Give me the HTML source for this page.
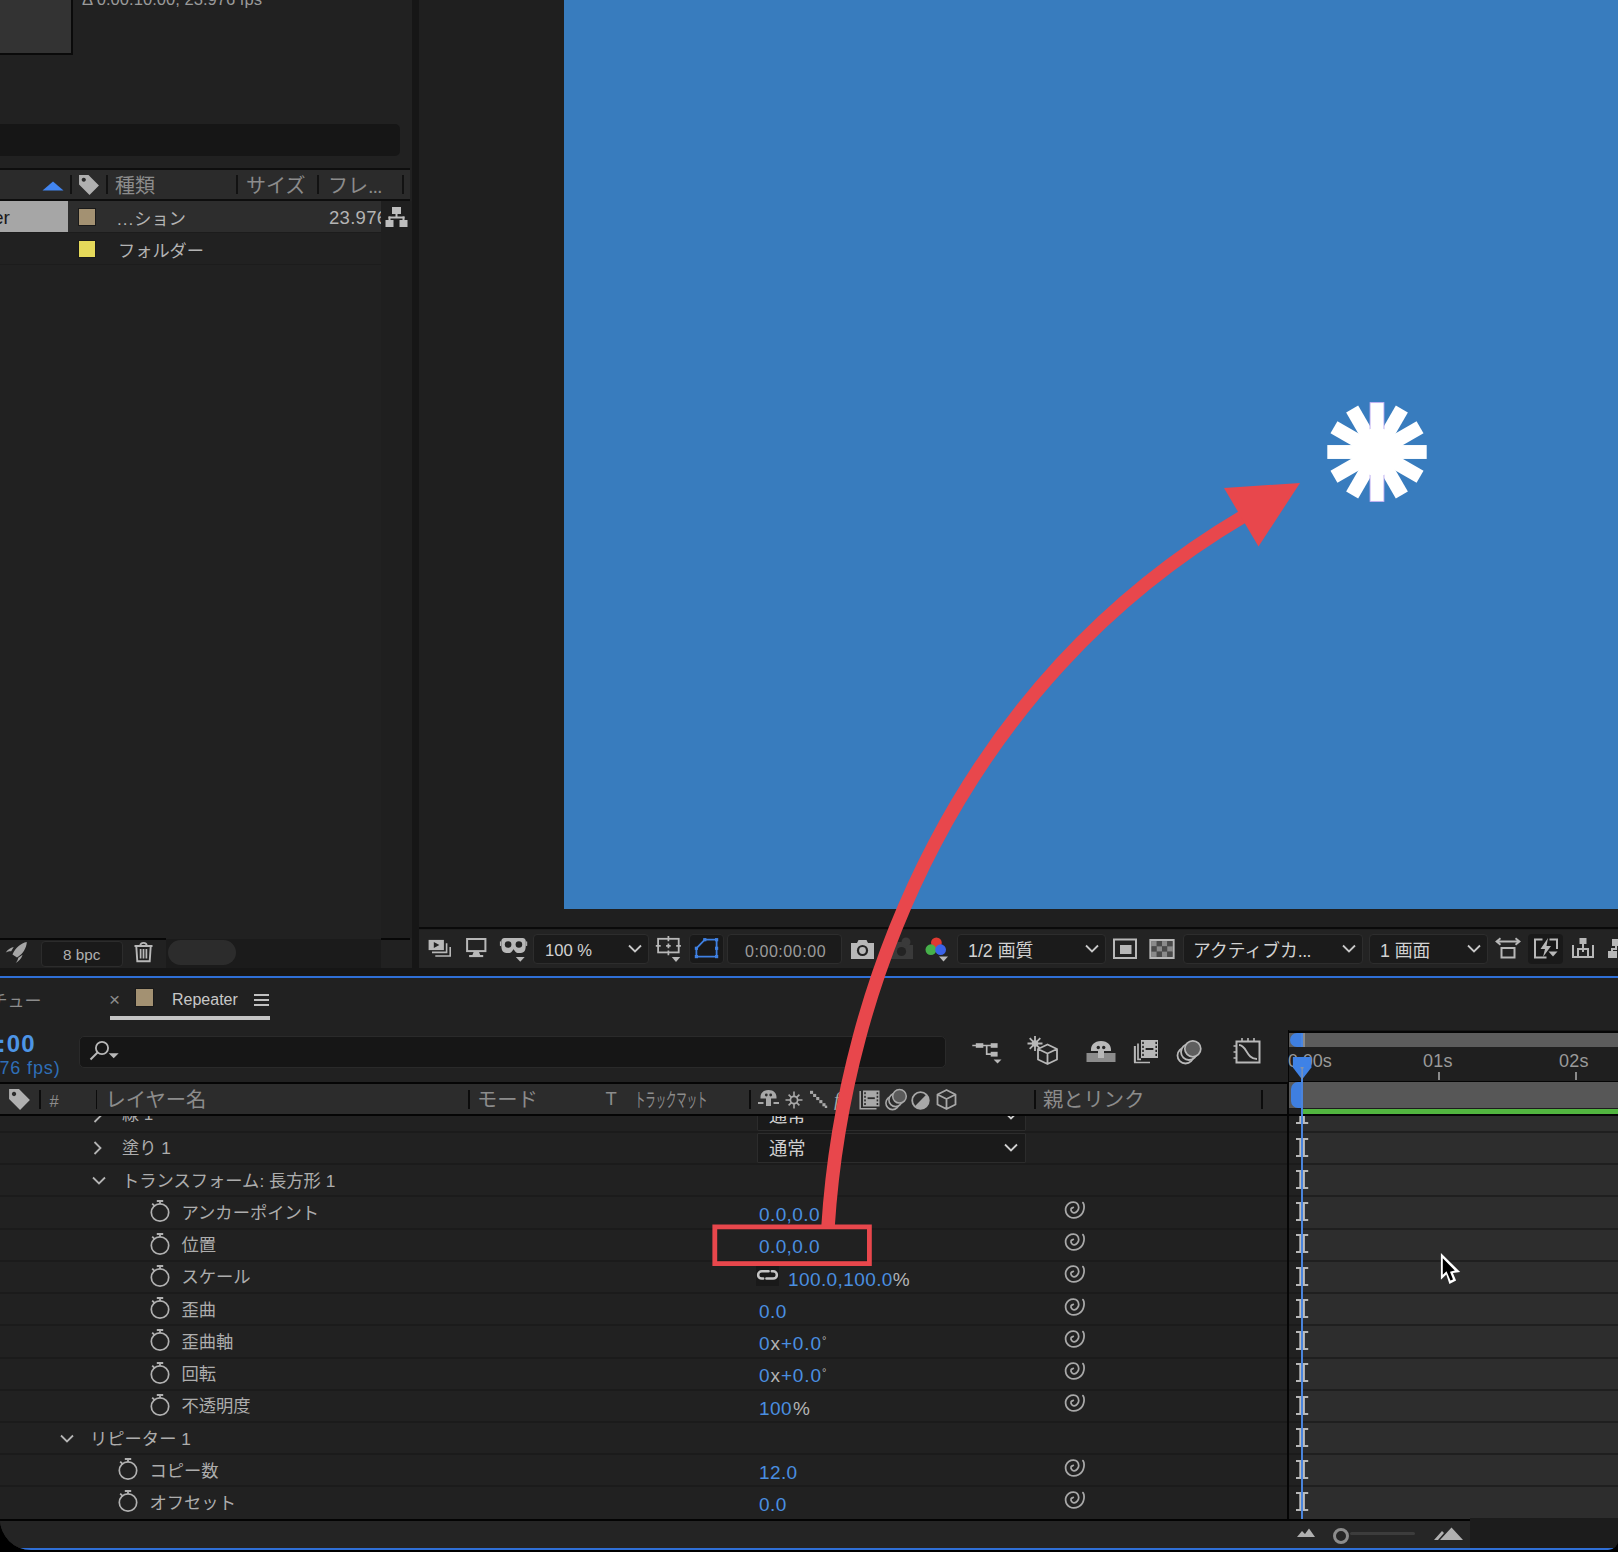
<!DOCTYPE html><html><head><meta charset="utf-8"><title>AE</title><style>
html,body{margin:0;padding:0;background:#000;}
body{width:1618px;height:1552px;overflow:hidden;position:relative;font-family:"Liberation Sans","Noto Sans CJK JP",sans-serif;}
#win{position:absolute;left:0;top:0;width:1618px;height:1550px;background:#161616;overflow:hidden;border-radius:0 0 10px 31px;}
#win div,#win svg{position:absolute;}
.t{white-space:nowrap;}
</style></head><body><div id="win"><div style="left:0px;top:0px;width:412px;height:968px;background:#212121;"></div>
<div style="left:381px;top:201px;width:31px;height:737px;background:#1f1f1f;"></div>
<div style="left:0px;top:0px;width:71px;height:53px;background:#333333;border-right:2px solid #0a0a0a;border-bottom:2px solid #0a0a0a;"></div>
<div class="t" style="left:82px;top:-10.3px;font-size:16.6px;line-height:20px;color:#9a9a9a;">Δ 0:00:10:00, 23.976 fps</div>
<div style="left:0px;top:124px;width:400px;height:32px;background:#161616;border-radius:0 5px 5px 0;"></div>
<div style="left:0px;top:168px;width:410px;height:33px;background:#0e0e0e;"></div>
<div style="left:0px;top:170px;width:410px;height:29px;background:#2b2b2b;"></div>
<div style="left:70px;top:175px;width:2px;height:19px;background:#121212;"></div>
<div style="left:106px;top:175px;width:2px;height:19px;background:#121212;"></div>
<div style="left:236px;top:175px;width:2px;height:19px;background:#121212;"></div>
<div style="left:317px;top:175px;width:2px;height:19px;background:#121212;"></div>
<div style="left:402px;top:175px;width:2px;height:19px;background:#121212;"></div>
<svg style="left:42px;top:181px" width="22" height="10" viewBox="0 0 22 10"><path d="M0.5 9.5 L11 0.5 L21.5 9.5 Z" fill="#4285f0"/></svg>
<svg style="left:78px;top:174px" width="22" height="22" viewBox="0 0 21 21"><path d="M1 1 H10 L20 11 L11 20 L1 10 Z M5.5 3.5 a2 2 0 1 0 0.01 0 Z" fill="#b0b0b0" fill-rule="evenodd"/></svg>
<div class="t" style="left:115px;top:172px;font-size:20px;line-height:28px;color:#8c8c8c;">種類</div>
<div class="t" style="left:246px;top:172px;font-size:20px;line-height:28px;color:#8c8c8c;">サイズ</div>
<div class="t" style="left:328px;top:172px;font-size:20px;line-height:28px;color:#8c8c8c;">フレ<span style="letter-spacing:-1px">...</span></div>
<div style="left:0px;top:201px;width:381px;height:31px;background:#2d2d2d;"></div>
<div style="left:0px;top:201px;width:68px;height:31px;background:#a6a6a6;"></div>
<div class="t" style="left:-7px;top:205px;font-size:19px;line-height:26px;color:#1a1a1a;">er</div>
<div style="left:0px;top:232px;width:381px;height:1px;background:#1c1c1c;"></div>
<div style="left:0px;top:264px;width:381px;height:1px;background:#1c1c1c;"></div>
<div style="left:78px;top:208px;width:18px;height:18px;background:#1a1a1a;"></div>
<div style="left:79px;top:209px;width:16px;height:16px;background:#a39172;"></div>
<div style="left:78px;top:240px;width:18px;height:18px;background:#1a1a1a;"></div>
<div style="left:79px;top:241px;width:16px;height:16px;background:#e5d95a;"></div>
<div class="t" style="left:117px;top:206px;font-size:17.2px;line-height:26px;color:#b4b4b4;"><span style="letter-spacing:1px">...</span>ション</div>
<div class="t" style="left:118px;top:238px;font-size:17.2px;line-height:26px;color:#b4b4b4;">フォルダー</div>
<div class="t" style="left:300px;top:204px;width:81px;overflow:hidden;height:28px;"><div class="t" style="left:29px;top:0;font-size:18.5px;line-height:28px;color:#b4b4b4;letter-spacing:0.3px">23.976</div></div>
<svg style="left:385px;top:206px" width="24" height="22" viewBox="0 0 24 22"><g fill="#bdbdbd"><rect x="7" y="1" width="9" height="7"/><rect x="0.5" y="14" width="8" height="7"/><rect x="14.5" y="14" width="8" height="7"/><rect x="10.5" y="8" width="2" height="4"/><rect x="3.5" y="10.5" width="16" height="2"/><rect x="3.5" y="10.5" width="2" height="4"/><rect x="17.5" y="10.5" width="2" height="4"/></g></svg>
<div style="left:0px;top:938px;width:166px;height:2px;background:#070707;"></div>
<div style="left:381px;top:938px;width:29px;height:2px;background:#070707;"></div>
<div style="left:166px;top:939px;width:215px;height:29px;background:#1b1b1b;"></div>
<div style="left:168px;top:940px;width:68px;height:25px;background:#2c2c2c;border-radius:13px;"></div>
<div style="left:41px;top:941px;width:80px;height:24px;background:#1a1a1a;border:1px solid #2c2c2c;border-radius:4px;box-sizing:content-box;"></div>
<div class="t" style="left:63px;top:944px;font-size:15.3px;line-height:22px;color:#b0b0b0;">8 bpc</div>
<div style="left:419px;top:0px;width:1199px;height:968px;background:#1f1f1f;"></div>
<div style="left:564px;top:0px;width:1054px;height:909px;background:#387cbe;"></div>
<div style="left:419px;top:927px;width:1199px;height:2px;background:#0a0a0a;"></div>
<div style="left:419px;top:930px;width:1199px;height:38px;background:#232323;"></div>
<div style="left:0px;top:976px;width:1618px;height:2px;background:#2f6fd6;"></div>
<div style="left:0px;top:978px;width:1618px;height:572px;background:#212121;"></div>
<div class="t" style="left:-9.5px;top:989.5px;font-size:17px;line-height:24px;color:#8c8c8c;">チュー</div>
<div class="t" style="left:109px;top:988px;font-size:19px;line-height:24px;color:#8c8c8c;">×</div>
<div style="left:135px;top:988px;width:19px;height:19px;background:#1a1a1a;"></div>
<div style="left:136px;top:989px;width:17px;height:17px;background:#a39172;"></div>
<div class="t" style="left:172px;top:988px;font-size:16px;line-height:24px;color:#c8c8c8;">Repeater</div>
<svg style="left:254px;top:993px" width="15" height="14" viewBox="0 0 15 14"><path d="M0 2 H15 M0 7 H15 M0 12 H15" stroke="#c0c0c0" stroke-width="1.8" fill="none"/></svg>
<div style="left:110px;top:1016px;width:160px;height:4px;background:#c4c4c4;"></div>
<div class="t" style="left:-2.5px;top:1030px;font-size:24px;line-height:28px;color:#4d95e6;font-weight:bold;letter-spacing:1.2px;">:00</div>
<div class="t" style="left:-0.5px;top:1056px;font-size:18px;line-height:24px;color:#2f6fb8;letter-spacing:0.85px;">76 fps)</div>
<div style="left:79px;top:1036px;width:867px;height:32px;background:#161616;border-radius:5px;border:1px solid #2a2a2a;box-sizing:border-box;"></div>
<svg style="left:89px;top:1040px" width="32" height="22" viewBox="0 0 32 22"><circle cx="13" cy="8" r="6.1" stroke="#b8b8b8" stroke-width="1.8" fill="none"/><path d="M8.5 12.5 L1.5 19.5" stroke="#b8b8b8" stroke-width="1.9"/><path d="M19.7 13.2 H29.7 L24.7 18.2 Z" fill="#b8b8b8"/></svg>
<div style="left:0px;top:1082px;width:1288px;height:34px;background:#050505;"></div>
<div style="left:0px;top:1084px;width:1288px;height:30.2px;background:#2c2c2c;"></div>
<svg style="left:8px;top:1088px" width="23" height="23" viewBox="0 0 21 21"><path d="M1 1 H10 L20 11 L11 20 L1 10 Z M5.5 3.5 a2 2 0 1 0 0.01 0 Z" fill="#b0b0b0" fill-rule="evenodd"/></svg>
<div style="left:39.3px;top:1090px;width:1.6px;height:19px;background:#0c0c0c;"></div>
<div style="left:95.5px;top:1090px;width:1.6px;height:19px;background:#0c0c0c;"></div>
<div style="left:468px;top:1090px;width:1.6px;height:19px;background:#0c0c0c;"></div>
<div style="left:749px;top:1090px;width:1.6px;height:19px;background:#0c0c0c;"></div>
<div style="left:1034px;top:1090px;width:1.6px;height:19px;background:#0c0c0c;"></div>
<div style="left:1261px;top:1090px;width:1.6px;height:19px;background:#0c0c0c;"></div>
<div class="t" style="left:49.5px;top:1090px;font-size:16.5px;line-height:22px;color:#8c8c8c;">#</div>
<div class="t" style="left:105.5px;top:1086.2px;font-size:20.3px;line-height:28px;color:#8c8c8c;">レイヤー名</div>
<div class="t" style="left:477px;top:1086.2px;font-size:20.3px;line-height:28px;color:#8c8c8c;">モード</div>
<div class="t" style="left:605.5px;top:1087px;font-size:18.5px;line-height:24px;color:#8c8c8c;">T</div>
<div class="t" style="left:635px;top:1086px;font-size:19.5px;line-height:28px;color:#8c8c8c;transform:scaleX(0.53);transform-origin:0 0;">トラックマット</div>
<div class="t" style="left:1043px;top:1086.2px;font-size:20.3px;line-height:28px;color:#8c8c8c;">親とリンク</div>
<div style="left:0px;top:1116px;width:1288px;height:403px;background:#212121;"></div>
<div style="left:1289px;top:1116px;width:13px;height:403px;background:#212121;"></div>
<div style="left:1302px;top:1116px;width:316px;height:403px;background:#2d2d2d;"></div>
<div style="left:0px;top:1131px;width:1287px;height:2px;background:#1b1b1b;"></div>
<div style="left:1289px;top:1131px;width:13px;height:2px;background:#1b1b1b;"></div>
<div style="left:1302px;top:1131px;width:316px;height:2px;background:#1f1f1f;"></div>
<div style="left:0px;top:1163px;width:1287px;height:2px;background:#1b1b1b;"></div>
<div style="left:1289px;top:1163px;width:13px;height:2px;background:#1b1b1b;"></div>
<div style="left:1302px;top:1163px;width:316px;height:2px;background:#1f1f1f;"></div>
<div style="left:0px;top:1195px;width:1287px;height:2px;background:#1b1b1b;"></div>
<div style="left:1289px;top:1195px;width:13px;height:2px;background:#1b1b1b;"></div>
<div style="left:1302px;top:1195px;width:316px;height:2px;background:#1f1f1f;"></div>
<div style="left:0px;top:1228px;width:1287px;height:2px;background:#1b1b1b;"></div>
<div style="left:1289px;top:1228px;width:13px;height:2px;background:#1b1b1b;"></div>
<div style="left:1302px;top:1228px;width:316px;height:2px;background:#1f1f1f;"></div>
<div style="left:0px;top:1260px;width:1287px;height:2px;background:#1b1b1b;"></div>
<div style="left:1289px;top:1260px;width:13px;height:2px;background:#1b1b1b;"></div>
<div style="left:1302px;top:1260px;width:316px;height:2px;background:#1f1f1f;"></div>
<div style="left:0px;top:1292px;width:1287px;height:2px;background:#1b1b1b;"></div>
<div style="left:1289px;top:1292px;width:13px;height:2px;background:#1b1b1b;"></div>
<div style="left:1302px;top:1292px;width:316px;height:2px;background:#1f1f1f;"></div>
<div style="left:0px;top:1324px;width:1287px;height:2px;background:#1b1b1b;"></div>
<div style="left:1289px;top:1324px;width:13px;height:2px;background:#1b1b1b;"></div>
<div style="left:1302px;top:1324px;width:316px;height:2px;background:#1f1f1f;"></div>
<div style="left:0px;top:1357px;width:1287px;height:2px;background:#1b1b1b;"></div>
<div style="left:1289px;top:1357px;width:13px;height:2px;background:#1b1b1b;"></div>
<div style="left:1302px;top:1357px;width:316px;height:2px;background:#1f1f1f;"></div>
<div style="left:0px;top:1389px;width:1287px;height:2px;background:#1b1b1b;"></div>
<div style="left:1289px;top:1389px;width:13px;height:2px;background:#1b1b1b;"></div>
<div style="left:1302px;top:1389px;width:316px;height:2px;background:#1f1f1f;"></div>
<div style="left:0px;top:1421px;width:1287px;height:2px;background:#1b1b1b;"></div>
<div style="left:1289px;top:1421px;width:13px;height:2px;background:#1b1b1b;"></div>
<div style="left:1302px;top:1421px;width:316px;height:2px;background:#1f1f1f;"></div>
<div style="left:0px;top:1453px;width:1287px;height:2px;background:#1b1b1b;"></div>
<div style="left:1289px;top:1453px;width:13px;height:2px;background:#1b1b1b;"></div>
<div style="left:1302px;top:1453px;width:316px;height:2px;background:#1f1f1f;"></div>
<div style="left:0px;top:1485px;width:1287px;height:2px;background:#1b1b1b;"></div>
<div style="left:1289px;top:1485px;width:13px;height:2px;background:#1b1b1b;"></div>
<div style="left:1302px;top:1485px;width:316px;height:2px;background:#1f1f1f;"></div>
<div style="left:1288px;top:1030px;width:1.5px;height:52px;background:#050505;"></div>
<div style="left:1287.3px;top:1082px;width:2px;height:437px;background:#050505;"></div>
<div style="left:0px;top:1518.5px;width:1470px;height:2.5px;background:#030303;"></div>
<div style="left:1470px;top:1517.5px;width:148px;height:31px;background:#1c1c1c;"></div>
<div style="left:1290px;top:1521px;width:180px;height:27px;background:#262626;"></div>
<div style="left:0px;top:1521px;width:1290px;height:27px;background:#242424;"></div>
<div style="left:0px;top:1548px;width:1618px;height:2px;background:#2f6fd6;"></div>
<div style="left:0;top:1116px;width:1288px;height:15px;overflow:hidden;"><div class="t" style="left:122px;top:-14px;font-size:17px;line-height:26px;color:#adadad">線 1</div><svg style="left:93px;top:-7px" width="9" height="14" viewBox="0 0 9 14"><path d="M1.5 1 L7.5 7 L1.5 13" stroke="#b4b4b4" stroke-width="1.8" fill="none"/></svg><div style="left:757px;top:-15.5px;width:269px;height:30px;background:#1a1a1a;border:1px solid #2c2c2c;box-sizing:border-box;border-radius:1px"></div><div class="t" style="left:769px;top:-13px;font-size:18.3px;line-height:26px;color:#d0d0d0">通常</div><svg style="left:1004px;top:-5px" width="14" height="9" viewBox="0 0 14 9"><path d="M1 1.5 L7 7.5 L13 1.5" stroke="#d0d0d0" stroke-width="1.8" fill="none"/></svg></div>
<svg style="left:93px;top:1141px" width="9" height="14" viewBox="0 0 9 14"><path d="M1.5 1 L7.5 7 L1.5 13" stroke="#b4b4b4" stroke-width="1.8" fill="none"/></svg>
<div class="t" style="left:122px;top:1135.4px;font-size:17.3px;line-height:26px;color:#adadad;">塗り 1</div>
<div style="left:757px;top:1133px;width:269px;height:30px;background:#1a1a1a;border:1px solid #2c2c2c;box-sizing:border-box;border-radius:1px;"></div>
<div class="t" style="left:769px;top:1135.5px;font-size:18.3px;line-height:26px;color:#d0d0d0;">通常</div>
<svg style="left:1004px;top:1143px" width="14" height="9" viewBox="0 0 14 9"><path d="M1 1.5 L7 7.5 L13 1.5" stroke="#d0d0d0" stroke-width="1.8" fill="none"/></svg>
<svg style="left:92px;top:1176px" width="14" height="9" viewBox="0 0 14 9"><path d="M1 1.5 L7 7.5 L13 1.5" stroke="#b4b4b4" stroke-width="1.8" fill="none"/></svg>
<div class="t" style="left:122px;top:1167.6px;font-size:17.3px;line-height:26px;color:#adadad;">トランスフォーム: 長方形 1</div>
<svg style="left:149px;top:1199px" width="22" height="24" viewBox="0 0 22 24"><circle cx="11" cy="13.5" r="8.7" stroke="#b0b0b0" stroke-width="1.7" fill="none"/><path d="M7.8 2 H14.2 M11 2 V5 M3.2 4.6 L6 7.4" stroke="#b0b0b0" stroke-width="1.8" fill="none"/></svg>
<div class="t" style="left:181.5px;top:1199.9px;font-size:17.3px;line-height:26px;color:#adadad;">アンカーポイント</div>
<div class="t" style="left:759px;top:1202.2px;font-size:19px;line-height:26px;color:#4a8fe0;letter-spacing:0.4px">0.0,0.0</div>
<svg style="left:1055px;top:1194.8px" width="40" height="30" viewBox="0 0 40 30"><path d="M18.29 12.36 C17.92 12.61 16.32 13.10 16.07 13.84 C15.82 14.59 16.28 16.15 16.81 16.81 C17.35 17.47 18.38 17.92 19.28 17.80 C20.19 17.68 21.51 16.89 22.25 16.07 C22.99 15.25 23.73 14.09 23.73 12.86 C23.73 11.62 23.11 9.60 22.25 8.65 C21.38 7.70 19.94 7.21 18.54 7.17 C17.14 7.13 15.08 7.62 13.84 8.41 C12.61 9.19 11.66 10.71 11.12 11.87 C10.59 13.02 10.51 14.09 10.63 15.33 C10.75 16.56 11.17 18.17 11.87 19.28 C12.57 20.40 13.68 21.38 14.83 22.00 C15.99 22.62 17.35 23.03 18.79 22.99 C20.23 22.95 22.08 22.50 23.49 21.76 C24.89 21.01 26.29 19.86 27.19 18.54 C28.10 17.22 28.64 15.29 28.92 13.84 C29.21 12.40 29.09 10.92 28.92 9.89 C28.76 8.86 28.10 8.03 27.94 7.66" stroke="#a8a8a8" stroke-width="1.75" fill="none" stroke-linecap="round"/></svg>
<svg style="left:149px;top:1232px" width="22" height="24" viewBox="0 0 22 24"><circle cx="11" cy="13.5" r="8.7" stroke="#b0b0b0" stroke-width="1.7" fill="none"/><path d="M7.8 2 H14.2 M11 2 V5 M3.2 4.6 L6 7.4" stroke="#b0b0b0" stroke-width="1.8" fill="none"/></svg>
<div class="t" style="left:181.5px;top:1232.1px;font-size:17.3px;line-height:26px;color:#adadad;">位置</div>
<div class="t" style="left:759px;top:1234.4px;font-size:19px;line-height:26px;color:#4a8fe0;letter-spacing:0.4px">0.0,0.0</div>
<svg style="left:1055px;top:1227.0px" width="40" height="30" viewBox="0 0 40 30"><path d="M18.29 12.36 C17.92 12.61 16.32 13.10 16.07 13.84 C15.82 14.59 16.28 16.15 16.81 16.81 C17.35 17.47 18.38 17.92 19.28 17.80 C20.19 17.68 21.51 16.89 22.25 16.07 C22.99 15.25 23.73 14.09 23.73 12.86 C23.73 11.62 23.11 9.60 22.25 8.65 C21.38 7.70 19.94 7.21 18.54 7.17 C17.14 7.13 15.08 7.62 13.84 8.41 C12.61 9.19 11.66 10.71 11.12 11.87 C10.59 13.02 10.51 14.09 10.63 15.33 C10.75 16.56 11.17 18.17 11.87 19.28 C12.57 20.40 13.68 21.38 14.83 22.00 C15.99 22.62 17.35 23.03 18.79 22.99 C20.23 22.95 22.08 22.50 23.49 21.76 C24.89 21.01 26.29 19.86 27.19 18.54 C28.10 17.22 28.64 15.29 28.92 13.84 C29.21 12.40 29.09 10.92 28.92 9.89 C28.76 8.86 28.10 8.03 27.94 7.66" stroke="#a8a8a8" stroke-width="1.75" fill="none" stroke-linecap="round"/></svg>
<svg style="left:149px;top:1264px" width="22" height="24" viewBox="0 0 22 24"><circle cx="11" cy="13.5" r="8.7" stroke="#b0b0b0" stroke-width="1.7" fill="none"/><path d="M7.8 2 H14.2 M11 2 V5 M3.2 4.6 L6 7.4" stroke="#b0b0b0" stroke-width="1.8" fill="none"/></svg>
<div class="t" style="left:181.5px;top:1264.3px;font-size:17.3px;line-height:26px;color:#adadad;">スケール</div>
<svg style="left:1055px;top:1259.2px" width="40" height="30" viewBox="0 0 40 30"><path d="M18.29 12.36 C17.92 12.61 16.32 13.10 16.07 13.84 C15.82 14.59 16.28 16.15 16.81 16.81 C17.35 17.47 18.38 17.92 19.28 17.80 C20.19 17.68 21.51 16.89 22.25 16.07 C22.99 15.25 23.73 14.09 23.73 12.86 C23.73 11.62 23.11 9.60 22.25 8.65 C21.38 7.70 19.94 7.21 18.54 7.17 C17.14 7.13 15.08 7.62 13.84 8.41 C12.61 9.19 11.66 10.71 11.12 11.87 C10.59 13.02 10.51 14.09 10.63 15.33 C10.75 16.56 11.17 18.17 11.87 19.28 C12.57 20.40 13.68 21.38 14.83 22.00 C15.99 22.62 17.35 23.03 18.79 22.99 C20.23 22.95 22.08 22.50 23.49 21.76 C24.89 21.01 26.29 19.86 27.19 18.54 C28.10 17.22 28.64 15.29 28.92 13.84 C29.21 12.40 29.09 10.92 28.92 9.89 C28.76 8.86 28.10 8.03 27.94 7.66" stroke="#a8a8a8" stroke-width="1.75" fill="none" stroke-linecap="round"/></svg>
<svg style="left:149px;top:1296px" width="22" height="24" viewBox="0 0 22 24"><circle cx="11" cy="13.5" r="8.7" stroke="#b0b0b0" stroke-width="1.7" fill="none"/><path d="M7.8 2 H14.2 M11 2 V5 M3.2 4.6 L6 7.4" stroke="#b0b0b0" stroke-width="1.8" fill="none"/></svg>
<div class="t" style="left:181.5px;top:1296.6px;font-size:17.3px;line-height:26px;color:#adadad;">歪曲</div>
<div class="t" style="left:759px;top:1298.9px;font-size:19px;line-height:26px;color:#4a8fe0;letter-spacing:0.4px">0.0</div>
<svg style="left:1055px;top:1291.5px" width="40" height="30" viewBox="0 0 40 30"><path d="M18.29 12.36 C17.92 12.61 16.32 13.10 16.07 13.84 C15.82 14.59 16.28 16.15 16.81 16.81 C17.35 17.47 18.38 17.92 19.28 17.80 C20.19 17.68 21.51 16.89 22.25 16.07 C22.99 15.25 23.73 14.09 23.73 12.86 C23.73 11.62 23.11 9.60 22.25 8.65 C21.38 7.70 19.94 7.21 18.54 7.17 C17.14 7.13 15.08 7.62 13.84 8.41 C12.61 9.19 11.66 10.71 11.12 11.87 C10.59 13.02 10.51 14.09 10.63 15.33 C10.75 16.56 11.17 18.17 11.87 19.28 C12.57 20.40 13.68 21.38 14.83 22.00 C15.99 22.62 17.35 23.03 18.79 22.99 C20.23 22.95 22.08 22.50 23.49 21.76 C24.89 21.01 26.29 19.86 27.19 18.54 C28.10 17.22 28.64 15.29 28.92 13.84 C29.21 12.40 29.09 10.92 28.92 9.89 C28.76 8.86 28.10 8.03 27.94 7.66" stroke="#a8a8a8" stroke-width="1.75" fill="none" stroke-linecap="round"/></svg>
<svg style="left:149px;top:1328px" width="22" height="24" viewBox="0 0 22 24"><circle cx="11" cy="13.5" r="8.7" stroke="#b0b0b0" stroke-width="1.7" fill="none"/><path d="M7.8 2 H14.2 M11 2 V5 M3.2 4.6 L6 7.4" stroke="#b0b0b0" stroke-width="1.8" fill="none"/></svg>
<div class="t" style="left:181.5px;top:1328.8px;font-size:17.3px;line-height:26px;color:#adadad;">歪曲軸</div>
<div class="t" style="left:759px;top:1331.1px;font-size:19px;line-height:26px;color:#4a8fe0;letter-spacing:0.4px"><span style="letter-spacing:0.9px">0<span style="color:#b4b4b4">x</span>+0.0</span><span style="color:#b4b4b4;font-size:11px;position:relative;top:-6.5px;line-height:1px;letter-spacing:0">°</span></div>
<svg style="left:1055px;top:1323.7px" width="40" height="30" viewBox="0 0 40 30"><path d="M18.29 12.36 C17.92 12.61 16.32 13.10 16.07 13.84 C15.82 14.59 16.28 16.15 16.81 16.81 C17.35 17.47 18.38 17.92 19.28 17.80 C20.19 17.68 21.51 16.89 22.25 16.07 C22.99 15.25 23.73 14.09 23.73 12.86 C23.73 11.62 23.11 9.60 22.25 8.65 C21.38 7.70 19.94 7.21 18.54 7.17 C17.14 7.13 15.08 7.62 13.84 8.41 C12.61 9.19 11.66 10.71 11.12 11.87 C10.59 13.02 10.51 14.09 10.63 15.33 C10.75 16.56 11.17 18.17 11.87 19.28 C12.57 20.40 13.68 21.38 14.83 22.00 C15.99 22.62 17.35 23.03 18.79 22.99 C20.23 22.95 22.08 22.50 23.49 21.76 C24.89 21.01 26.29 19.86 27.19 18.54 C28.10 17.22 28.64 15.29 28.92 13.84 C29.21 12.40 29.09 10.92 28.92 9.89 C28.76 8.86 28.10 8.03 27.94 7.66" stroke="#a8a8a8" stroke-width="1.75" fill="none" stroke-linecap="round"/></svg>
<svg style="left:149px;top:1361px" width="22" height="24" viewBox="0 0 22 24"><circle cx="11" cy="13.5" r="8.7" stroke="#b0b0b0" stroke-width="1.7" fill="none"/><path d="M7.8 2 H14.2 M11 2 V5 M3.2 4.6 L6 7.4" stroke="#b0b0b0" stroke-width="1.8" fill="none"/></svg>
<div class="t" style="left:181.5px;top:1361.0px;font-size:17.3px;line-height:26px;color:#adadad;">回転</div>
<div class="t" style="left:759px;top:1363.3px;font-size:19px;line-height:26px;color:#4a8fe0;letter-spacing:0.4px"><span style="letter-spacing:0.9px">0<span style="color:#b4b4b4">x</span>+0.0</span><span style="color:#b4b4b4;font-size:11px;position:relative;top:-6.5px;line-height:1px;letter-spacing:0">°</span></div>
<svg style="left:1055px;top:1355.9px" width="40" height="30" viewBox="0 0 40 30"><path d="M18.29 12.36 C17.92 12.61 16.32 13.10 16.07 13.84 C15.82 14.59 16.28 16.15 16.81 16.81 C17.35 17.47 18.38 17.92 19.28 17.80 C20.19 17.68 21.51 16.89 22.25 16.07 C22.99 15.25 23.73 14.09 23.73 12.86 C23.73 11.62 23.11 9.60 22.25 8.65 C21.38 7.70 19.94 7.21 18.54 7.17 C17.14 7.13 15.08 7.62 13.84 8.41 C12.61 9.19 11.66 10.71 11.12 11.87 C10.59 13.02 10.51 14.09 10.63 15.33 C10.75 16.56 11.17 18.17 11.87 19.28 C12.57 20.40 13.68 21.38 14.83 22.00 C15.99 22.62 17.35 23.03 18.79 22.99 C20.23 22.95 22.08 22.50 23.49 21.76 C24.89 21.01 26.29 19.86 27.19 18.54 C28.10 17.22 28.64 15.29 28.92 13.84 C29.21 12.40 29.09 10.92 28.92 9.89 C28.76 8.86 28.10 8.03 27.94 7.66" stroke="#a8a8a8" stroke-width="1.75" fill="none" stroke-linecap="round"/></svg>
<svg style="left:149px;top:1393px" width="22" height="24" viewBox="0 0 22 24"><circle cx="11" cy="13.5" r="8.7" stroke="#b0b0b0" stroke-width="1.7" fill="none"/><path d="M7.8 2 H14.2 M11 2 V5 M3.2 4.6 L6 7.4" stroke="#b0b0b0" stroke-width="1.8" fill="none"/></svg>
<div class="t" style="left:181.5px;top:1393.2px;font-size:17.3px;line-height:26px;color:#adadad;">不透明度</div>
<div class="t" style="left:759px;top:1395.5px;font-size:19px;line-height:26px;color:#4a8fe0;letter-spacing:0.4px">100<span style="color:#b4b4b4"><span style="margin-left:1px">%</span></span></div>
<svg style="left:1055px;top:1388.1px" width="40" height="30" viewBox="0 0 40 30"><path d="M18.29 12.36 C17.92 12.61 16.32 13.10 16.07 13.84 C15.82 14.59 16.28 16.15 16.81 16.81 C17.35 17.47 18.38 17.92 19.28 17.80 C20.19 17.68 21.51 16.89 22.25 16.07 C22.99 15.25 23.73 14.09 23.73 12.86 C23.73 11.62 23.11 9.60 22.25 8.65 C21.38 7.70 19.94 7.21 18.54 7.17 C17.14 7.13 15.08 7.62 13.84 8.41 C12.61 9.19 11.66 10.71 11.12 11.87 C10.59 13.02 10.51 14.09 10.63 15.33 C10.75 16.56 11.17 18.17 11.87 19.28 C12.57 20.40 13.68 21.38 14.83 22.00 C15.99 22.62 17.35 23.03 18.79 22.99 C20.23 22.95 22.08 22.50 23.49 21.76 C24.89 21.01 26.29 19.86 27.19 18.54 C28.10 17.22 28.64 15.29 28.92 13.84 C29.21 12.40 29.09 10.92 28.92 9.89 C28.76 8.86 28.10 8.03 27.94 7.66" stroke="#a8a8a8" stroke-width="1.75" fill="none" stroke-linecap="round"/></svg>
<div class="t" style="left:788px;top:1266.6px;font-size:19px;line-height:26px;color:#4a8fe0;letter-spacing:0.4px">100.0,100.0<span style="color:#b4b4b4">%</span></div>
<div style="left:756px;top:1266px;width:23px;height:20px;background:#191919;"></div>
<svg style="left:756px;top:1266px" width="23" height="20" viewBox="0 0 23 20"><path d="M12.6 5.2 H5.8 a3.7 3.7 0 0 0 0 7.4 H7.2 M10.4 12.6 H17.2 a3.7 3.7 0 0 0 0 -7.4 H15.8" stroke="#c4c4c4" stroke-width="2.5" fill="none" stroke-linecap="round"/></svg>
<svg style="left:60px;top:1434px" width="14" height="9" viewBox="0 0 14 9"><path d="M1 1.5 L7 7.5 L13 1.5" stroke="#b4b4b4" stroke-width="1.8" fill="none"/></svg>
<div class="t" style="left:90px;top:1425.5px;font-size:17.3px;line-height:26px;color:#adadad;">リピーター 1</div>
<svg style="left:117px;top:1457px" width="22" height="24" viewBox="0 0 22 24"><circle cx="11" cy="13.5" r="8.7" stroke="#b0b0b0" stroke-width="1.7" fill="none"/><path d="M7.8 2 H14.2 M11 2 V5 M3.2 4.6 L6 7.4" stroke="#b0b0b0" stroke-width="1.8" fill="none"/></svg>
<div class="t" style="left:149.5px;top:1457.7px;font-size:17.3px;line-height:26px;color:#adadad;">コピー数</div>
<div class="t" style="left:759px;top:1460.0px;font-size:19px;line-height:26px;color:#4a8fe0;letter-spacing:0.4px">12.0</div>
<svg style="left:1055px;top:1452.6px" width="40" height="30" viewBox="0 0 40 30"><path d="M18.29 12.36 C17.92 12.61 16.32 13.10 16.07 13.84 C15.82 14.59 16.28 16.15 16.81 16.81 C17.35 17.47 18.38 17.92 19.28 17.80 C20.19 17.68 21.51 16.89 22.25 16.07 C22.99 15.25 23.73 14.09 23.73 12.86 C23.73 11.62 23.11 9.60 22.25 8.65 C21.38 7.70 19.94 7.21 18.54 7.17 C17.14 7.13 15.08 7.62 13.84 8.41 C12.61 9.19 11.66 10.71 11.12 11.87 C10.59 13.02 10.51 14.09 10.63 15.33 C10.75 16.56 11.17 18.17 11.87 19.28 C12.57 20.40 13.68 21.38 14.83 22.00 C15.99 22.62 17.35 23.03 18.79 22.99 C20.23 22.95 22.08 22.50 23.49 21.76 C24.89 21.01 26.29 19.86 27.19 18.54 C28.10 17.22 28.64 15.29 28.92 13.84 C29.21 12.40 29.09 10.92 28.92 9.89 C28.76 8.86 28.10 8.03 27.94 7.66" stroke="#a8a8a8" stroke-width="1.75" fill="none" stroke-linecap="round"/></svg>
<svg style="left:117px;top:1489px" width="22" height="24" viewBox="0 0 22 24"><circle cx="11" cy="13.5" r="8.7" stroke="#b0b0b0" stroke-width="1.7" fill="none"/><path d="M7.8 2 H14.2 M11 2 V5 M3.2 4.6 L6 7.4" stroke="#b0b0b0" stroke-width="1.8" fill="none"/></svg>
<div class="t" style="left:149.5px;top:1489.9px;font-size:17.3px;line-height:26px;color:#adadad;">オフセット</div>
<div class="t" style="left:759px;top:1492.2px;font-size:19px;line-height:26px;color:#4a8fe0;letter-spacing:0.4px">0.0</div>
<svg style="left:1055px;top:1484.8px" width="40" height="30" viewBox="0 0 40 30"><path d="M18.29 12.36 C17.92 12.61 16.32 13.10 16.07 13.84 C15.82 14.59 16.28 16.15 16.81 16.81 C17.35 17.47 18.38 17.92 19.28 17.80 C20.19 17.68 21.51 16.89 22.25 16.07 C22.99 15.25 23.73 14.09 23.73 12.86 C23.73 11.62 23.11 9.60 22.25 8.65 C21.38 7.70 19.94 7.21 18.54 7.17 C17.14 7.13 15.08 7.62 13.84 8.41 C12.61 9.19 11.66 10.71 11.12 11.87 C10.59 13.02 10.51 14.09 10.63 15.33 C10.75 16.56 11.17 18.17 11.87 19.28 C12.57 20.40 13.68 21.38 14.83 22.00 C15.99 22.62 17.35 23.03 18.79 22.99 C20.23 22.95 22.08 22.50 23.49 21.76 C24.89 21.01 26.29 19.86 27.19 18.54 C28.10 17.22 28.64 15.29 28.92 13.84 C29.21 12.40 29.09 10.92 28.92 9.89 C28.76 8.86 28.10 8.03 27.94 7.66" stroke="#a8a8a8" stroke-width="1.75" fill="none" stroke-linecap="round"/></svg>
<div style="left:1289px;top:1030px;width:329px;height:2px;background:#161616;"></div>
<div style="left:1289px;top:1030.5px;width:329px;height:2.5px;background:#050505;"></div>
<div style="left:1289px;top:1033px;width:329px;height:14px;background:#5c5c5c;"></div>
<div style="left:1289.5px;top:1033px;width:12px;height:14px;background:#3f7fe0;border-radius:7px 0 0 7px;"></div>
<div style="left:1301px;top:1033px;width:2px;height:14px;background:#4a86e0;"></div>
<div style="left:1303px;top:1033px;width:1.5px;height:14px;background:#8a8a8a;"></div>
<div style="left:1289px;top:1047px;width:329px;height:34px;background:#1f1f1f;"></div>
<div class="t" style="left:1288px;top:1049.5px;font-size:18px;line-height:22px;color:#9a9a9a;letter-spacing:-0.1px;">0:00s</div>
<div class="t" style="left:1423px;top:1049.5px;font-size:18px;line-height:22px;color:#9a9a9a;letter-spacing:0.2px;">01s</div>
<div class="t" style="left:1559px;top:1049.5px;font-size:18px;line-height:22px;color:#9a9a9a;letter-spacing:0.2px;">02s</div>
<div style="left:1438px;top:1072px;width:2px;height:8px;background:#8a8a8a;"></div>
<div style="left:1575px;top:1072px;width:2px;height:8px;background:#8a8a8a;"></div>
<div style="left:1289px;top:1080.6px;width:329px;height:2px;background:#050505;"></div>
<div style="left:1289px;top:1082.4px;width:329px;height:26px;background:#575757;"></div>
<div style="left:1291px;top:1082.4px;width:10px;height:26px;background:#3f7fe0;border-radius:7px 0 0 7px;"></div>
<div style="left:1289px;top:1108.4px;width:329px;height:1px;background:#1c1c1c;"></div>
<div style="left:1302px;top:1109.2px;width:316px;height:5.4px;background:#52b540;"></div>
<div style="left:1289px;top:1114.4px;width:329px;height:2px;background:#050505;"></div>
<div style="left:1295px;top:1116.4px;width:14px;height:12px;overflow:hidden"><svg style="left:0.9px;top:-11px" width="13" height="19" viewBox="0 0 13 19"><path d="M0 1 H12.2 M0 18 H12.2" stroke="#b8b8b8" stroke-width="2" fill="none"/><rect x="3.3" y="1" width="5.6" height="17" fill="#bcbcbc"/></svg></div>
<svg style="left:1295.9px;top:1137.7px" width="13" height="19" viewBox="0 0 13 19"><path d="M0 1 H12.2 M0 18 H12.2" stroke="#b8b8b8" stroke-width="2" fill="none"/><rect x="3.3" y="1" width="5.6" height="17" fill="#bcbcbc"/></svg>
<svg style="left:1295.9px;top:1169.9px" width="13" height="19" viewBox="0 0 13 19"><path d="M0 1 H12.2 M0 18 H12.2" stroke="#b8b8b8" stroke-width="2" fill="none"/><rect x="3.3" y="1" width="5.6" height="17" fill="#bcbcbc"/></svg>
<svg style="left:1295.9px;top:1202.2px" width="13" height="19" viewBox="0 0 13 19"><path d="M0 1 H12.2 M0 18 H12.2" stroke="#b8b8b8" stroke-width="2" fill="none"/><rect x="3.3" y="1" width="5.6" height="17" fill="#bcbcbc"/></svg>
<svg style="left:1295.9px;top:1234.4px" width="13" height="19" viewBox="0 0 13 19"><path d="M0 1 H12.2 M0 18 H12.2" stroke="#b8b8b8" stroke-width="2" fill="none"/><rect x="3.3" y="1" width="5.6" height="17" fill="#bcbcbc"/></svg>
<svg style="left:1295.9px;top:1266.6px" width="13" height="19" viewBox="0 0 13 19"><path d="M0 1 H12.2 M0 18 H12.2" stroke="#b8b8b8" stroke-width="2" fill="none"/><rect x="3.3" y="1" width="5.6" height="17" fill="#bcbcbc"/></svg>
<svg style="left:1295.9px;top:1298.9px" width="13" height="19" viewBox="0 0 13 19"><path d="M0 1 H12.2 M0 18 H12.2" stroke="#b8b8b8" stroke-width="2" fill="none"/><rect x="3.3" y="1" width="5.6" height="17" fill="#bcbcbc"/></svg>
<svg style="left:1295.9px;top:1331.1px" width="13" height="19" viewBox="0 0 13 19"><path d="M0 1 H12.2 M0 18 H12.2" stroke="#b8b8b8" stroke-width="2" fill="none"/><rect x="3.3" y="1" width="5.6" height="17" fill="#bcbcbc"/></svg>
<svg style="left:1295.9px;top:1363.3px" width="13" height="19" viewBox="0 0 13 19"><path d="M0 1 H12.2 M0 18 H12.2" stroke="#b8b8b8" stroke-width="2" fill="none"/><rect x="3.3" y="1" width="5.6" height="17" fill="#bcbcbc"/></svg>
<svg style="left:1295.9px;top:1395.6px" width="13" height="19" viewBox="0 0 13 19"><path d="M0 1 H12.2 M0 18 H12.2" stroke="#b8b8b8" stroke-width="2" fill="none"/><rect x="3.3" y="1" width="5.6" height="17" fill="#bcbcbc"/></svg>
<svg style="left:1295.9px;top:1427.8px" width="13" height="19" viewBox="0 0 13 19"><path d="M0 1 H12.2 M0 18 H12.2" stroke="#b8b8b8" stroke-width="2" fill="none"/><rect x="3.3" y="1" width="5.6" height="17" fill="#bcbcbc"/></svg>
<svg style="left:1295.9px;top:1460.0px" width="13" height="19" viewBox="0 0 13 19"><path d="M0 1 H12.2 M0 18 H12.2" stroke="#b8b8b8" stroke-width="2" fill="none"/><rect x="3.3" y="1" width="5.6" height="17" fill="#bcbcbc"/></svg>
<svg style="left:1295.9px;top:1492.2px" width="13" height="19" viewBox="0 0 13 19"><path d="M0 1 H12.2 M0 18 H12.2" stroke="#b8b8b8" stroke-width="2" fill="none"/><rect x="3.3" y="1" width="5.6" height="17" fill="#bcbcbc"/></svg>
<div style="left:1300.9px;top:1075px;width:2.3px;height:444px;background:#4a84dc;"></div>
<svg style="left:1292px;top:1056px" width="20" height="25" viewBox="0 0 20 25"><path d="M0.9 1 H19.4 V11.5 L10.1 23.4 L0.9 11.5 Z" fill="#3f82e6"/><path d="M10.1 11.5 V23 M8.5 11.8 H11.7" stroke="#9a9a9a" stroke-width="1" fill="none"/></svg>
<svg style="left:1297px;top:1528px" width="18" height="9" viewBox="0 0 18 9"><path d="M0 9 L5 3 L8 6 L12 0.5 L18 9 Z" fill="#b0b0b0"/></svg>
<div style="left:1350px;top:1532px;width:65px;height:3px;background:#3c3c3c;border-radius:2px;"></div>
<div style="left:1333px;top:1528px;width:16px;height:16px;background:transparent;border:3px solid #8c8c8c;border-radius:50%;box-sizing:border-box;"></div>
<svg style="left:1434px;top:1527px" width="30" height="14" viewBox="0 0 30 14"><path d="M0 13 L8 4 L10 6 L4 13 Z M6 13 L17.5 0.5 L29 13 Z" fill="#b0b0b0"/></svg>
<svg style="left:428px;top:938px" width="24" height="21" viewBox="0 0 24 21"><rect x="0.6" y="1.9" width="15.3" height="10.2" fill="#b8b8b8"/><path d="M5.8 4.1 L11.4 7 L5.8 9.9 Z" fill="#232323"/><path d="M4 14.4 H18.6 V5.2 M7.3 18 H22.2 V8.9" stroke="#b8b8b8" stroke-width="1.6" fill="none"/></svg>
<svg style="left:465px;top:937px" width="23" height="21" viewBox="0 0 23 21"><rect x="2.1" y="2" width="18.3" height="12.1" stroke="#b8b8b8" stroke-width="2" fill="none"/><path d="M8.6 15 H14 L15.2 18.1 H7.4 Z" fill="#b8b8b8"/><rect x="4.1" y="18" width="14.1" height="2.1" fill="#b8b8b8"/></svg>
<svg style="left:499px;top:936px" width="30" height="27" viewBox="0 0 30 27"><path d="M5.5 2 H23.6 Q26.8 2 26.8 5.5 V9 Q26.8 14 25 15.8 Q24 16.9 22 16.9 H18.5 Q17 16.9 16.2 15.6 L14.55 13.3 L12.9 15.6 Q12.1 16.9 10.6 16.9 H7.1 Q5.1 16.9 4.1 15.8 Q2.3 14 2.3 9 V5.5 Q2.3 2 5.5 2 Z" fill="#b8b8b8"/><rect x="0.9" y="5.2" width="1.1" height="4.8" rx="0.5" fill="#b8b8b8"/><rect x="27.1" y="5.2" width="1.1" height="4.8" rx="0.5" fill="#b8b8b8"/><circle cx="9.1" cy="8.5" r="3.3" fill="#232323"/><circle cx="19.9" cy="8.5" r="3.3" fill="#232323"/><path d="M16.8 21.1 H25.7 L21.25 25.8 Z" fill="#b8b8b8"/></svg>
<div style="left:533px;top:934px;width:116px;height:30px;background:#1b1b1b;border:1px solid #2d2d2d;box-sizing:border-box;border-radius:4px;"></div>
<div class="t" style="left:545px;top:939px;font-size:16.6px;line-height:24px;color:#d2d2d2;">100 %</div>
<svg style="left:628px;top:944px" width="14" height="9" viewBox="0 0 14 9"><path d="M1 1.5 L7 7.5 L13 1.5" stroke="#c8c8c8" stroke-width="1.8" fill="none"/></svg>
<svg style="left:655px;top:935px" width="27" height="28" viewBox="0 0 27 28"><rect x="3.1" y="3.8" width="20.6" height="13.6" stroke="#b8b8b8" stroke-width="1.8" fill="none"/><path d="M13.4 1 V6.3 M13.4 15.4 V20.2 M0.8 10.9 H5.7 M21.2 10.9 H25.9 M11.1 10.9 H15.7 M13.4 8.6 V13.2" stroke="#b8b8b8" stroke-width="1.7" fill="none"/><path d="M16.8 21.9 H25.2 L21 26.9 Z" fill="#b8b8b8"/></svg>
<div style="left:689px;top:934px;width:35px;height:30px;background:#191919;border-radius:4px;border:1px solid #2a2a2a;box-sizing:border-box;"></div>
<svg style="left:693px;top:936px" width="28" height="26" viewBox="0 0 28 26"><path d="M3.4 20.6 V12.3 L11.8 3.7 H23.6 V20.6 Z" stroke="#3f80e2" stroke-width="1.8" fill="none"/><g fill="#3f80e2"><rect x="1.8" y="19.0" width="3.2" height="3.2"/><rect x="1.8" y="10.7" width="3.2" height="3.2"/><rect x="10.2" y="2.1" width="3.2" height="3.2"/><rect x="22.0" y="2.1" width="3.2" height="3.2"/><rect x="22.0" y="10.7" width="3.2" height="3.2"/><rect x="22.0" y="19.0" width="3.2" height="3.2"/></g></svg>
<div style="left:727px;top:934px;width:115px;height:30px;background:#1b1b1b;border:1px solid #2d2d2d;box-sizing:border-box;border-radius:4px;"></div>
<div class="t" style="left:745px;top:939.5px;font-size:16px;line-height:24px;color:#9c9c9c;letter-spacing:0.55px">0:00:00:00</div>
<svg style="left:850px;top:939px" width="25" height="21" viewBox="0 0 25 21"><path d="M1 4 H7 L8.5 1 H16.5 L18 4 H24 V20 H1 Z" fill="#b8b8b8"/><circle cx="12.5" cy="11.5" r="5.6" fill="#232323"/><circle cx="12.5" cy="11.5" r="3.4" fill="#b8b8b8"/></svg>
<svg style="left:889px;top:937px" width="25" height="23" viewBox="0 0 25 23"><path d="M1 8 H7 L8.5 5 H16.5 L18 8 H24 V22 H1 Z" fill="#3a3a3a"/><circle cx="12.5" cy="14.5" r="4.6" fill="#232323"/><circle cx="17" cy="5" r="4.5" fill="#3a3a3a"/></svg>
<svg style="left:925px;top:936px" width="26" height="28" viewBox="0 0 26 28"><circle cx="11.4" cy="6.8" r="5.4" fill="#e03a32"/><circle cx="5.9" cy="13.7" r="5.4" fill="#46b04a"/><circle cx="15.6" cy="13.7" r="5.4" fill="#3a62e8"/><path d="M14 20.6 H23 L18.5 25.6 Z" fill="#b8b8b8"/></svg>
<div style="left:957px;top:934px;width:149px;height:30px;background:#1b1b1b;border:1px solid #2d2d2d;box-sizing:border-box;border-radius:4px;"></div>
<div class="t" style="left:968px;top:939px;font-size:17.8px;line-height:24px;color:#d2d2d2;">1/2 画質</div>
<svg style="left:1085px;top:944px" width="14" height="9" viewBox="0 0 14 9"><path d="M1 1.5 L7 7.5 L13 1.5" stroke="#c8c8c8" stroke-width="1.8" fill="none"/></svg>
<svg style="left:1113px;top:938px" width="24" height="22" viewBox="0 0 24 22"><rect x="1" y="1.5" width="22" height="18.5" stroke="#b8b8b8" stroke-width="2" fill="none"/><rect x="7" y="7" width="11.5" height="9" fill="#b8b8b8"/></svg>
<svg style="left:1149px;top:939px" width="26" height="20" viewBox="0 0 24 19"><rect x="1" y="1" width="22" height="17" stroke="#b8b8b8" stroke-width="2" fill="#4a4a4a"/><rect x="2" y="2" width="5" height="5" fill="#8a8a8a"/><rect x="2" y="7" width="5" height="5" fill="#4a4a4a"/><rect x="2" y="12" width="5" height="5" fill="#8a8a8a"/><rect x="7" y="2" width="5" height="5" fill="#4a4a4a"/><rect x="7" y="7" width="5" height="5" fill="#8a8a8a"/><rect x="7" y="12" width="5" height="5" fill="#4a4a4a"/><rect x="12" y="2" width="5" height="5" fill="#8a8a8a"/><rect x="12" y="7" width="5" height="5" fill="#4a4a4a"/><rect x="12" y="12" width="5" height="5" fill="#8a8a8a"/><rect x="17" y="2" width="5" height="5" fill="#4a4a4a"/><rect x="17" y="7" width="5" height="5" fill="#8a8a8a"/><rect x="17" y="12" width="5" height="5" fill="#4a4a4a"/></svg>
<div style="left:1183px;top:934px;width:180px;height:30px;background:#1b1b1b;border:1px solid #2d2d2d;box-sizing:border-box;border-radius:4px;"></div>
<div class="t" style="left:1193px;top:939px;font-size:17.8px;line-height:24px;color:#d2d2d2;">アクティブカ<span style="letter-spacing:-0.5px">...</span></div>
<svg style="left:1342px;top:944px" width="14" height="9" viewBox="0 0 14 9"><path d="M1 1.5 L7 7.5 L13 1.5" stroke="#c8c8c8" stroke-width="1.8" fill="none"/></svg>
<div style="left:1369px;top:934px;width:119px;height:30px;background:#1b1b1b;border:1px solid #2d2d2d;box-sizing:border-box;border-radius:4px;"></div>
<div class="t" style="left:1380px;top:939px;font-size:17.8px;line-height:24px;color:#d2d2d2;">1 画面</div>
<svg style="left:1467px;top:944px" width="14" height="9" viewBox="0 0 14 9"><path d="M1 1.5 L7 7.5 L13 1.5" stroke="#c8c8c8" stroke-width="1.8" fill="none"/></svg>
<svg style="left:1494px;top:937px" width="28" height="23" viewBox="0 0 28 23"><rect x="7.5" y="11" width="13" height="9.5" stroke="#b8b8b8" stroke-width="2" fill="none"/><path d="M3 4.5 H25 M6.5 1.3 L2.5 4.5 L6.5 7.7 M21.5 1.3 L25.5 4.5 L21.5 7.7" stroke="#b8b8b8" stroke-width="1.8" fill="none"/></svg>
<div style="left:1528px;top:934px;width:35px;height:30px;background:#191919;border-radius:4px;"></div>
<svg style="left:1533px;top:937px" width="26" height="24" viewBox="0 0 26 24"><path d="M9.5 2.5 H2 V20.5 H13.5 M16.5 2.5 H24 V12" stroke="#b8b8b8" stroke-width="2" fill="none"/><path d="M15 1 L7.5 12 H12 L10 20 L18 9 H13.5 Z" fill="#b8b8b8"/><path d="M15.5 14.5 H24.5 L20 19.5 Z" fill="#b8b8b8"/></svg>
<svg style="left:1571px;top:937px" width="24" height="22" viewBox="0 0 24 22"><path d="M2 8 V20 H22 V8" stroke="#b8b8b8" stroke-width="2" fill="none"/><rect x="8.5" y="1" width="7" height="6" fill="#b8b8b8"/><rect x="11" y="6" width="2" height="9" fill="#b8b8b8"/><rect x="6" y="11" width="2" height="8" fill="#b8b8b8"/><rect x="16" y="11" width="2" height="8" fill="#b8b8b8"/><rect x="6" y="11" width="12" height="2" fill="#b8b8b8"/></svg>
<svg style="left:1607px;top:938px" width="12" height="22" viewBox="0 0 12 22"><rect x="5" y="1" width="9" height="7" fill="#b8b8b8"/><rect x="1" y="13" width="9" height="7" fill="#b8b8b8"/><path d="M9 8 V11 H5 V13" stroke="#b8b8b8" stroke-width="2" fill="none"/></svg>
<svg style="left:4px;top:940px" width="25" height="25" viewBox="0 0 25 25"><path d="M22.8 2 C17 3 11 8 8.5 14.5 L13 17.5 C19 14 22.5 8 22.8 2 Z M1.8 12.5 C3.5 9.5 6.5 7.5 9.7 6.9 L7.2 11.3 C5 11.3 3.2 11.8 1.8 12.5 Z M11.8 23 C14.5 21.5 17.5 18.5 18.6 14.8 L14.3 17.8 C14 19.5 13 21.5 11.8 23 Z" fill="#a6a6a6"/></svg>
<svg style="left:133px;top:941px" width="21" height="22" viewBox="0 0 21 22"><path d="M1.5 5 H19.5 M7.3 4.6 C7.3 1 13.7 1 13.7 4.6" stroke="#b8b8b8" stroke-width="1.8" fill="none"/><path d="M3.3 5.5 L4.3 20.3 H16.7 L17.7 5.5" stroke="#b8b8b8" stroke-width="1.9" fill="none"/><path d="M7.6 8 V17.6 M10.5 8 V17.6 M13.4 8 V17.6" stroke="#b8b8b8" stroke-width="1.7" fill="none"/></svg>
<svg style="left:972px;top:1041px" width="31" height="23" viewBox="0 0 31 23"><g fill="#b8b8b8"><rect x="3.8" y="2.2" width="7.5" height="4.6"/><rect x="18.7" y="2.2" width="6.9" height="4.6"/><rect x="18.7" y="10.8" width="6.9" height="4.8"/><path d="M21.6 18.6 H29.5 L25.55 22.6 Z"/></g><path d="M0.3 4.5 H19 M14.7 4.5 V13.2 H19" stroke="#b8b8b8" stroke-width="1.7" fill="none"/></svg>
<svg style="left:1027px;top:1036px" width="32" height="30" viewBox="0 0 32 30"><path d="M8 0 V15 M0.5 7.5 H15.5 M2.7 2.2 L13.3 12.8 M13.3 2.2 L2.7 12.8" stroke="#b8b8b8" stroke-width="1.8"/><circle cx="8" cy="7.5" r="3.2" fill="#b8b8b8"/><path d="M11 13 l9.5 -4.5 l9.5 4.5 v10.5 l-9.5 4.5 l-9.5 -4.5 Z" fill="#232323"/><path d="M11 13 l9.5 -4.5 l9.5 4.5 v10.5 l-9.5 4.5 l-9.5 -4.5 Z M11 13 l9.5 4.5 l9.5 -4.5 M20.5 17.5 v10.5" stroke="#b8b8b8" stroke-width="1.8" fill="none" stroke-linejoin="round"/></svg>
<svg style="left:1086px;top:1040px" width="30" height="23" viewBox="0 0 30 23"><path d="M15 1 C8 1 5 5.5 5 9.5 V11 H12 V17 H18 V11 H25 V9.5 C25 5.5 22 1 15 1 Z" fill="#b8b8b8"/><circle cx="12.3" cy="7.5" r="1.7" fill="#232323"/><circle cx="17.7" cy="7.5" r="1.7" fill="#232323"/><rect x="0.5" y="13" width="29" height="9" fill="#8c8c8c"/><rect x="12" y="11" width="6" height="7" fill="#b8b8b8"/></svg>
<svg style="left:1133px;top:1039px" width="26" height="26" viewBox="0 0 26 26"><path d="M1.8 7 V23.5 H17 M5 4.5 V20.3 H8" stroke="#b8b8b8" stroke-width="1.7" fill="none"/><g fill="#b8b8b8"><rect x="0.9" y="7" width="1.8" height="16"/></g><rect x="8" y="1" width="17" height="18" fill="#b8b8b8"/><g fill="#232323"><rect x="9.2" y="2.8" width="1.6" height="2.2"/><rect x="9.2" y="6.8" width="1.6" height="2.2"/><rect x="9.2" y="10.8" width="1.6" height="2.2"/><rect x="9.2" y="14.8" width="1.6" height="2.2"/><rect x="22.4" y="2.8" width="1.6" height="2.2"/><rect x="22.4" y="6.8" width="1.6" height="2.2"/><rect x="22.4" y="10.8" width="1.6" height="2.2"/><rect x="22.4" y="14.8" width="1.6" height="2.2"/><rect x="12.6" y="9" width="7.8" height="2"/></g></svg>
<svg style="left:1176px;top:1039px" width="27" height="26" viewBox="0 0 27 26"><circle cx="9.5" cy="16.5" r="8" stroke="#b8b8b8" stroke-width="1.8" fill="#232323"/><circle cx="13" cy="13" r="8" stroke="#b8b8b8" stroke-width="1.8" fill="#232323"/><circle cx="16.8" cy="9.8" r="8" fill="#5e5e5e" stroke="#b8b8b8" stroke-width="1.7"/></svg>
<svg style="left:1233px;top:1037px" width="29" height="28" viewBox="0 0 29 28"><rect x="3.5" y="4.5" width="23" height="21" stroke="#b8b8b8" stroke-width="2" fill="none"/><path d="M6 8 C14 8 13 22 24 22" stroke="#b8b8b8" stroke-width="1.8" fill="none"/><path d="M0.5 9 H4 M0.5 15 H4 M0.5 21 H4 M9 1 V5 M15 1 V5 M21 1 V5" stroke="#b8b8b8" stroke-width="1.6"/></svg>
<svg style="left:758px;top:1089px" width="21" height="22" viewBox="0 0 21 22"><path d="M10.5 1 C5 1 2.5 4.5 2.5 8 V9.5 H8 V17 H13 V9.5 H18.5 V8 C18.5 4.5 16 1 10.5 1 Z" fill="#a8a8a8"/><circle cx="8.3" cy="6" r="1.4" fill="#2c2c2c"/><circle cx="12.7" cy="6" r="1.4" fill="#2c2c2c"/><path d="M0 14 H5.5 M15.5 14 H21" stroke="#a8a8a8" stroke-width="1.8"/></svg>
<svg style="left:785px;top:1091px" width="18" height="18" viewBox="0 0 18 18"><path d="M9 0.5 V17.5 M0.5 9 H17.5 M3.6 3.6 L14.4 14.4 M14.4 3.6 L3.6 14.4" stroke="#a8a8a8" stroke-width="1.6"/><circle cx="9" cy="9" r="3.6" fill="#2c2c2c" stroke="#a8a8a8" stroke-width="1.7"/></svg>
<svg style="left:809px;top:1090px" width="19" height="19" viewBox="0 0 19 19"><g fill="#a8a8a8"><rect x="1.0" y="0.8" width="3.1" height="3.1"/><rect x="4.1" y="3.9" width="3.1" height="3.1"/><rect x="7.2" y="7.0" width="3.1" height="3.1"/><rect x="10.3" y="10.1" width="3.1" height="3.1"/><rect x="13.4" y="13.2" width="3.1" height="3.1"/><rect x="15.8" y="15.6" width="2.4" height="2.4"/></g></svg>
<div class="t" style="left:834px;top:1088px;font-size:19px;line-height:24px;color:#a8a8a8;font-style:italic;font-family:'Liberation Serif',serif">fx</div>
<svg style="left:859px;top:1089px" width="21" height="22" viewBox="0 0 21 22"><path d="M1.2 2 V19.8 H17.5" stroke="#a8a8a8" stroke-width="1.5" fill="none"/><rect x="4" y="1.5" width="16.5" height="16" fill="#a8a8a8"/><g fill="#2c2c2c"><rect x="5.2" y="3.2" width="1.6" height="2"/><rect x="5.2" y="6.8" width="1.6" height="2"/><rect x="5.2" y="10.4" width="1.6" height="2"/><rect x="5.2" y="14" width="1.6" height="2"/><rect x="17.6" y="3.2" width="1.6" height="2"/><rect x="17.6" y="6.8" width="1.6" height="2"/><rect x="17.6" y="10.4" width="1.6" height="2"/><rect x="17.6" y="14" width="1.6" height="2"/><rect x="8.6" y="8.3" width="7.2" height="1.8"/></g></svg>
<svg style="left:885px;top:1088px" width="23" height="23" viewBox="0 0 23 23"><circle cx="7.5" cy="15" r="6.6" stroke="#a8a8a8" stroke-width="1.6" fill="#2c2c2c"/><circle cx="10.5" cy="12" r="6.6" stroke="#a8a8a8" stroke-width="1.6" fill="#2c2c2c"/><circle cx="14.5" cy="8.3" r="6.8" fill="#5a5a5a" stroke="#a8a8a8" stroke-width="1.5"/></svg>
<svg style="left:911px;top:1091px" width="19" height="19" viewBox="0 0 19 19"><circle cx="9.5" cy="9.5" r="8.3" stroke="#a8a8a8" stroke-width="1.8" fill="none"/><path d="M15.4 3.6 A8.3 8.3 0 0 1 3.6 15.4 Z" fill="#a8a8a8"/></svg>
<svg style="left:936px;top:1088px" width="21" height="23" viewBox="0 0 21 23"><path d="M1.5 6.5 l9 -4.5 l9 4.5 v10 l-9 4.5 l-9 -4.5 Z M1.5 6.5 l9 4.5 l9 -4.5 M10.5 11 v10" stroke="#a8a8a8" stroke-width="1.8" fill="none" stroke-linejoin="round"/></svg>
<svg style="left:1317.35px;top:391.7px" width="120" height="120" viewBox="-60 -60 120 120"><rect x="-49.7" y="-6.95" width="99.4" height="13.9" fill="#fff" transform="rotate(0)"/><rect x="-49.7" y="-6.95" width="99.4" height="13.9" fill="#fff" transform="rotate(30)"/><rect x="-49.7" y="-6.95" width="99.4" height="13.9" fill="#fff" transform="rotate(60)"/><rect x="-49.7" y="-6.95" width="99.4" height="13.9" fill="#fff" transform="rotate(90)"/><rect x="-49.7" y="-6.95" width="99.4" height="13.9" fill="#fff" transform="rotate(120)"/><rect x="-49.7" y="-6.95" width="99.4" height="13.9" fill="#fff" transform="rotate(150)"/><rect x="-6.95" y="-49.4" width="13.9" height="98.8" fill="#fff" stroke="#b9a8f0" stroke-width="0.9"/><circle r="24" fill="#fff"/></svg>
<svg style="left:700px;top:1215px" width="190" height="60" viewBox="700 1215 190 60"><rect x="714.8" y="1226.9" width="154.6" height="36.7" stroke="#e8474c" stroke-width="4.8" fill="none"/></svg>
<svg style="left:700px;top:440px" width="700" height="800" viewBox="700 440 700 800"><path d="M828 1227 C 843.3 984.8 958.4 684.3 1243.5 516.3" stroke="#e8474c" stroke-width="13.5" fill="none"/><path d="M1300 483 L1224 488 L1258.5 546.5 Z" fill="#e8474c"/></svg>
<svg style="left:1430px;top:1245px" width="40" height="45" viewBox="1430 1245 40 45"><path d="M1440.9 1252.9 V1279.8 L1446.3 1274.4 L1449.4 1284.1 L1456.1 1280.6 L1452.9 1272.9 L1460.2 1272.1 Z" fill="#fff"/><path d="M1442.8 1258.2 V1274.8 L1446.5 1271.3 L1450.5 1280.6 L1453 1279.4 L1450 1271.7 L1454.8 1270.5 Z" fill="#000"/></svg></div></body></html>
